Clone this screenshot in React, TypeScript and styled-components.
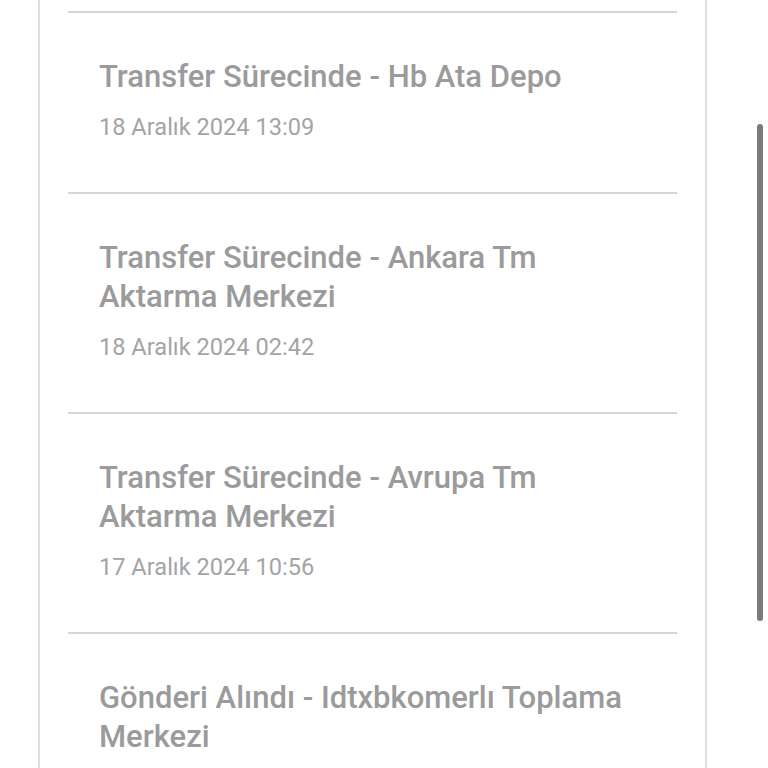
import styled, { createGlobalStyle } from "styled-components";

interface IEvent {
  title: string;
  date: string;
}

const events: IEvent[] = [
  { title: "Transfer Sürecinde - Hb Ata Depo", date: "18 Aralık 2024 13:09" },
  {
    title: "Transfer Sürecinde - Ankara Tm Aktarma Merkezi",
    date: "18 Aralık 2024 02:42",
  },
  {
    title: "Transfer Sürecinde - Avrupa Tm Aktarma Merkezi",
    date: "17 Aralık 2024 10:56",
  },
  {
    title: "Gönderi Alındı - Idtxbkomerlı Toplama Merkezi",
    date: "17 Aralık 2024 09:14",
  },
];

const App = () => {
  return (
    <>
      <GlobalStyle />
      <Page>
        <Card>
          {events.map((ev) => (
            <Item key={ev.title + ev.date}>
              <Title>{ev.title}</Title>
              <DateText>{ev.date}</DateText>
            </Item>
          ))}
        </Card>
        <ScrollThumb />
      </Page>
    </>
  );
};

const GlobalStyle = createGlobalStyle`
  html, body {
    margin: 0;
    padding: 0;
    background: #ffffff;
    overflow: hidden;
  }
  * {
    box-sizing: border-box;
  }
`;

const Page = styled.div`
  position: relative;
  width: 768px;
  height: 768px;
  overflow: hidden;
  background: #ffffff;
  font-family: Roboto, "Noto Sans", sans-serif;
`;

const Card = styled.div`
  margin-left: 38px;
  width: 669px;
  min-height: 800px;
  padding: 11px 28px 0;
  border-left: 2px solid #dedede;
  border-right: 2px solid #dedede;
`;

const Item = styled.div`
  border-top: 2px solid #d6d6d6;
  padding: 44px 30px 50px 31px;
`;

const Title = styled.div`
  font-size: 31px;
  font-weight: 500;
  line-height: 39px;
  color: #9b9b9b;
`;

const DateText = styled.div`
  margin-top: 16px;
  font-size: 23.6px;
  line-height: 30px;
  color: #a4a4a4;
`;

const ScrollThumb = styled.div`
  position: absolute;
  left: 757px;
  top: 124px;
  width: 6px;
  height: 497px;
  border-radius: 3px;
  background: #7b7b7b;
`;

export default App;
